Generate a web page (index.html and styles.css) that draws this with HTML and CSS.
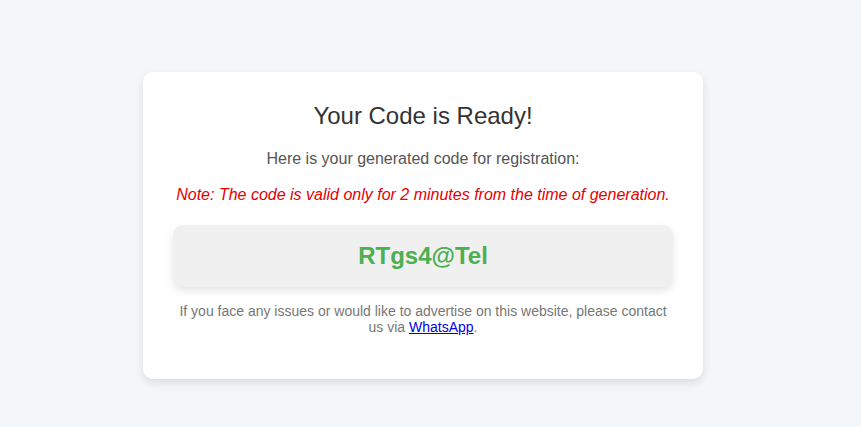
FILE: index.html
```html
<!DOCTYPE html>
<html lang="en">
<head>
    <meta charset="UTF-8">
    <meta name="viewport" content="width=device-width, initial-scale=1.0">
    <title>Your Code is Ready</title>
    <link rel="stylesheet" href="styles.css">
</head>
<body>
    <div class="page">
        <div class="container">
            <h2>Your Code is Ready!</h2>
            <p class="subtitle">Here is your generated code for registration:</p>
            <p class="note">Note: The code is valid only for 2 minutes from the time of generation.</p>
            <div class="code-box">RTgs4@Tel</div>
            <p class="contact">If you face any issues or would like to advertise on this website, please contact us via <a href="#">WhatsApp</a>.</p>
        </div>
    </div>
</body>
</html>
```

FILE: styles.css
```css
body {
    font-family: 'Liberation Sans', Arial, sans-serif;
    margin: 0;
    background-color: #f4f7f9;
    color: #333;
}

.page {
    display: flex;
    justify-content: center;
    padding: 72px 35px 40px 20px;
}

.container {
    width: 500px;
    background-color: #ffffff;
    padding: 30px 30px 44px;
    border-radius: 10px;
    box-shadow: 0 4px 10px rgba(0, 0, 0, 0.1);
    text-align: center;
}

h2 {
    margin: 0 0 20px;
    font-size: 24px;
    font-weight: normal;
    color: #333;
}

.subtitle {
    margin: 0 0 18px;
    font-size: 16px;
    color: #555;
}

.note {
    margin: 0 0 21px;
    font-size: 16px;
    font-style: italic;
    color: #e60000;
}

.code-box {
    background-color: #f0f0f0;
    padding: 17px 15px;
    border-radius: 10px;
    box-shadow: 0 4px 8px rgba(0, 0, 0, 0.1);
    font-size: 24px;
    font-weight: bold;
    color: #4caf50;
}

.contact {
    margin: 16px 0 0;
    font-size: 14px;
    color: #777;
}

.contact a {
    color: #0000ee;
}
```
